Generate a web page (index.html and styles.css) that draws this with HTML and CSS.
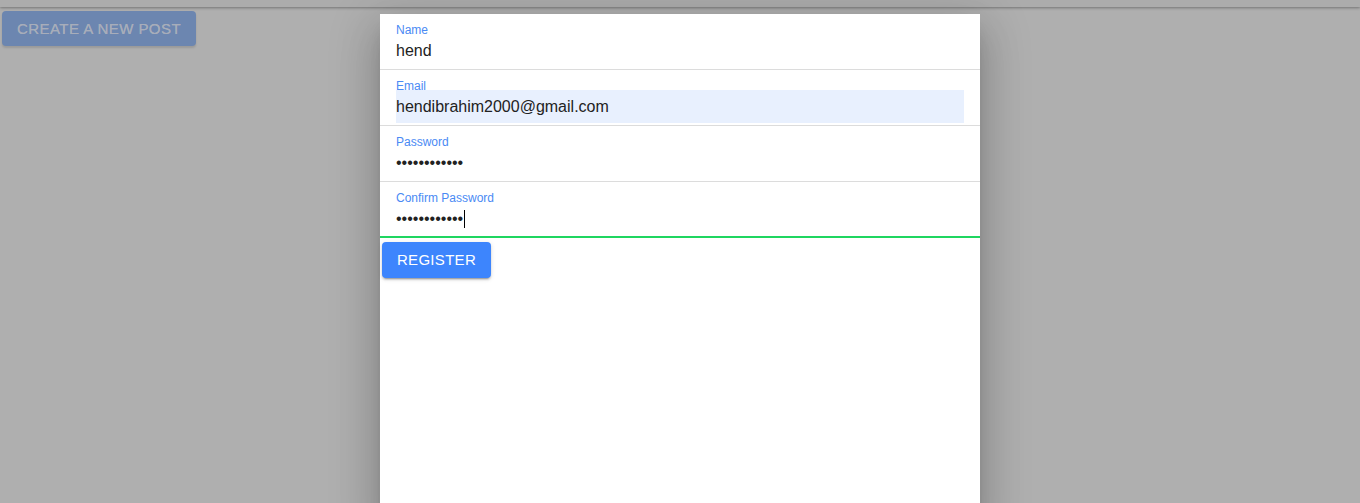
FILE: index.html
```html
<!DOCTYPE html>
<html>
<head>
<meta charset="utf-8">
<link rel="stylesheet" href="styles.css">
</head>
<body>
<div class="topbar"></div>
<div class="page">
  <button class="post-btn">Create a new post</button>
</div>
<div class="dialog">
  <div class="field">
    <div class="label">Name</div>
    <div class="value">hend</div>
  </div>
  <div class="field">
    <div class="label">Email</div>
    <div class="value autofill">hendibrahim2000@gmail.com</div>
  </div>
  <div class="field">
    <div class="label">Password</div>
    <div class="value">••••••••••••</div>
  </div>
  <div class="field focused">
    <div class="label">Confirm Password</div>
    <div class="value">••••••••••••<span class="caret"></span></div>
  </div>
  <button class="register-btn">Register</button>
</div>
</body>
</html>
```

FILE: styles.css
```css
html, body {
  margin: 0;
  padding: 0;
  height: 100%;
  overflow: hidden;
}
body {
  background: #afafaf;
  font-family: "Liberation Sans", Arial, sans-serif;
}
.topbar {
  height: 7px;
  background: #acacac;
  box-shadow: 0 1px 3px rgba(0,0,0,0.35);
}
.page {
  padding: 4px 0 0 2px;
}
.post-btn {
  height: 35px;
  width: 194px;
  border: none;
  border-radius: 4px;
  background: #6c86b0;
  color: #a7adba;
  font-family: "Liberation Sans", Arial, sans-serif;
  font-size: 15px;
  letter-spacing: 0.45px;
  text-transform: uppercase;
  padding: 0;
  text-shadow: 0 0 0.4px #a7adba;
  box-shadow: 0 2px 2px rgba(0,0,0,0.12);
}
.dialog {
  position: absolute;
  left: 380px;
  top: 14px;
  width: 600px;
  bottom: -20px;
  background: #fff;
  box-shadow: 0 11px 15px -7px rgba(0,0,0,0.2), 0 24px 38px 3px rgba(0,0,0,0.14), 0 9px 46px 8px rgba(0,0,0,0.12);
}
.field {
  height: 55px;
  border-bottom: 1px solid #dcdcdc;
  padding: 0 16px;
  display: flex;
  flex-direction: column;
}
.field.focused {
  height: 54px;
  border-bottom: 2px solid #1fd660;
}
.label {
  padding-top: 12px;
  line-height: 8px;
  height: 8px;
  font-size: 12px;
  color: #4a8af4;
  overflow: visible;
}
.value {
  height: 33px;
  line-height: 33px;
  font-size: 16px;
  color: #222;
  width: 568px;
  position: relative;
}
.autofill {
  background: #e8f0fe;
}
.caret {
  display: inline-block;
  width: 1px;
  height: 18px;
  background: #000;
  vertical-align: -4px;
  margin-left: 1px;
}
.register-btn {
  margin: 4px 0 0 2px;
  height: 36px;
  width: 109px;
  border: none;
  border-radius: 4px;
  background: #3d85fd;
  color: #fff;
  font-family: "Liberation Sans", Arial, sans-serif;
  font-size: 15px;
  letter-spacing: 0.3px;
  text-transform: uppercase;
  padding: 0 0 2px 0;
  box-shadow: 0 3px 1px -2px rgba(0,0,0,0.2), 0 2px 2px 0 rgba(0,0,0,0.14), 0 1px 5px 0 rgba(0,0,0,0.12);
}
```
